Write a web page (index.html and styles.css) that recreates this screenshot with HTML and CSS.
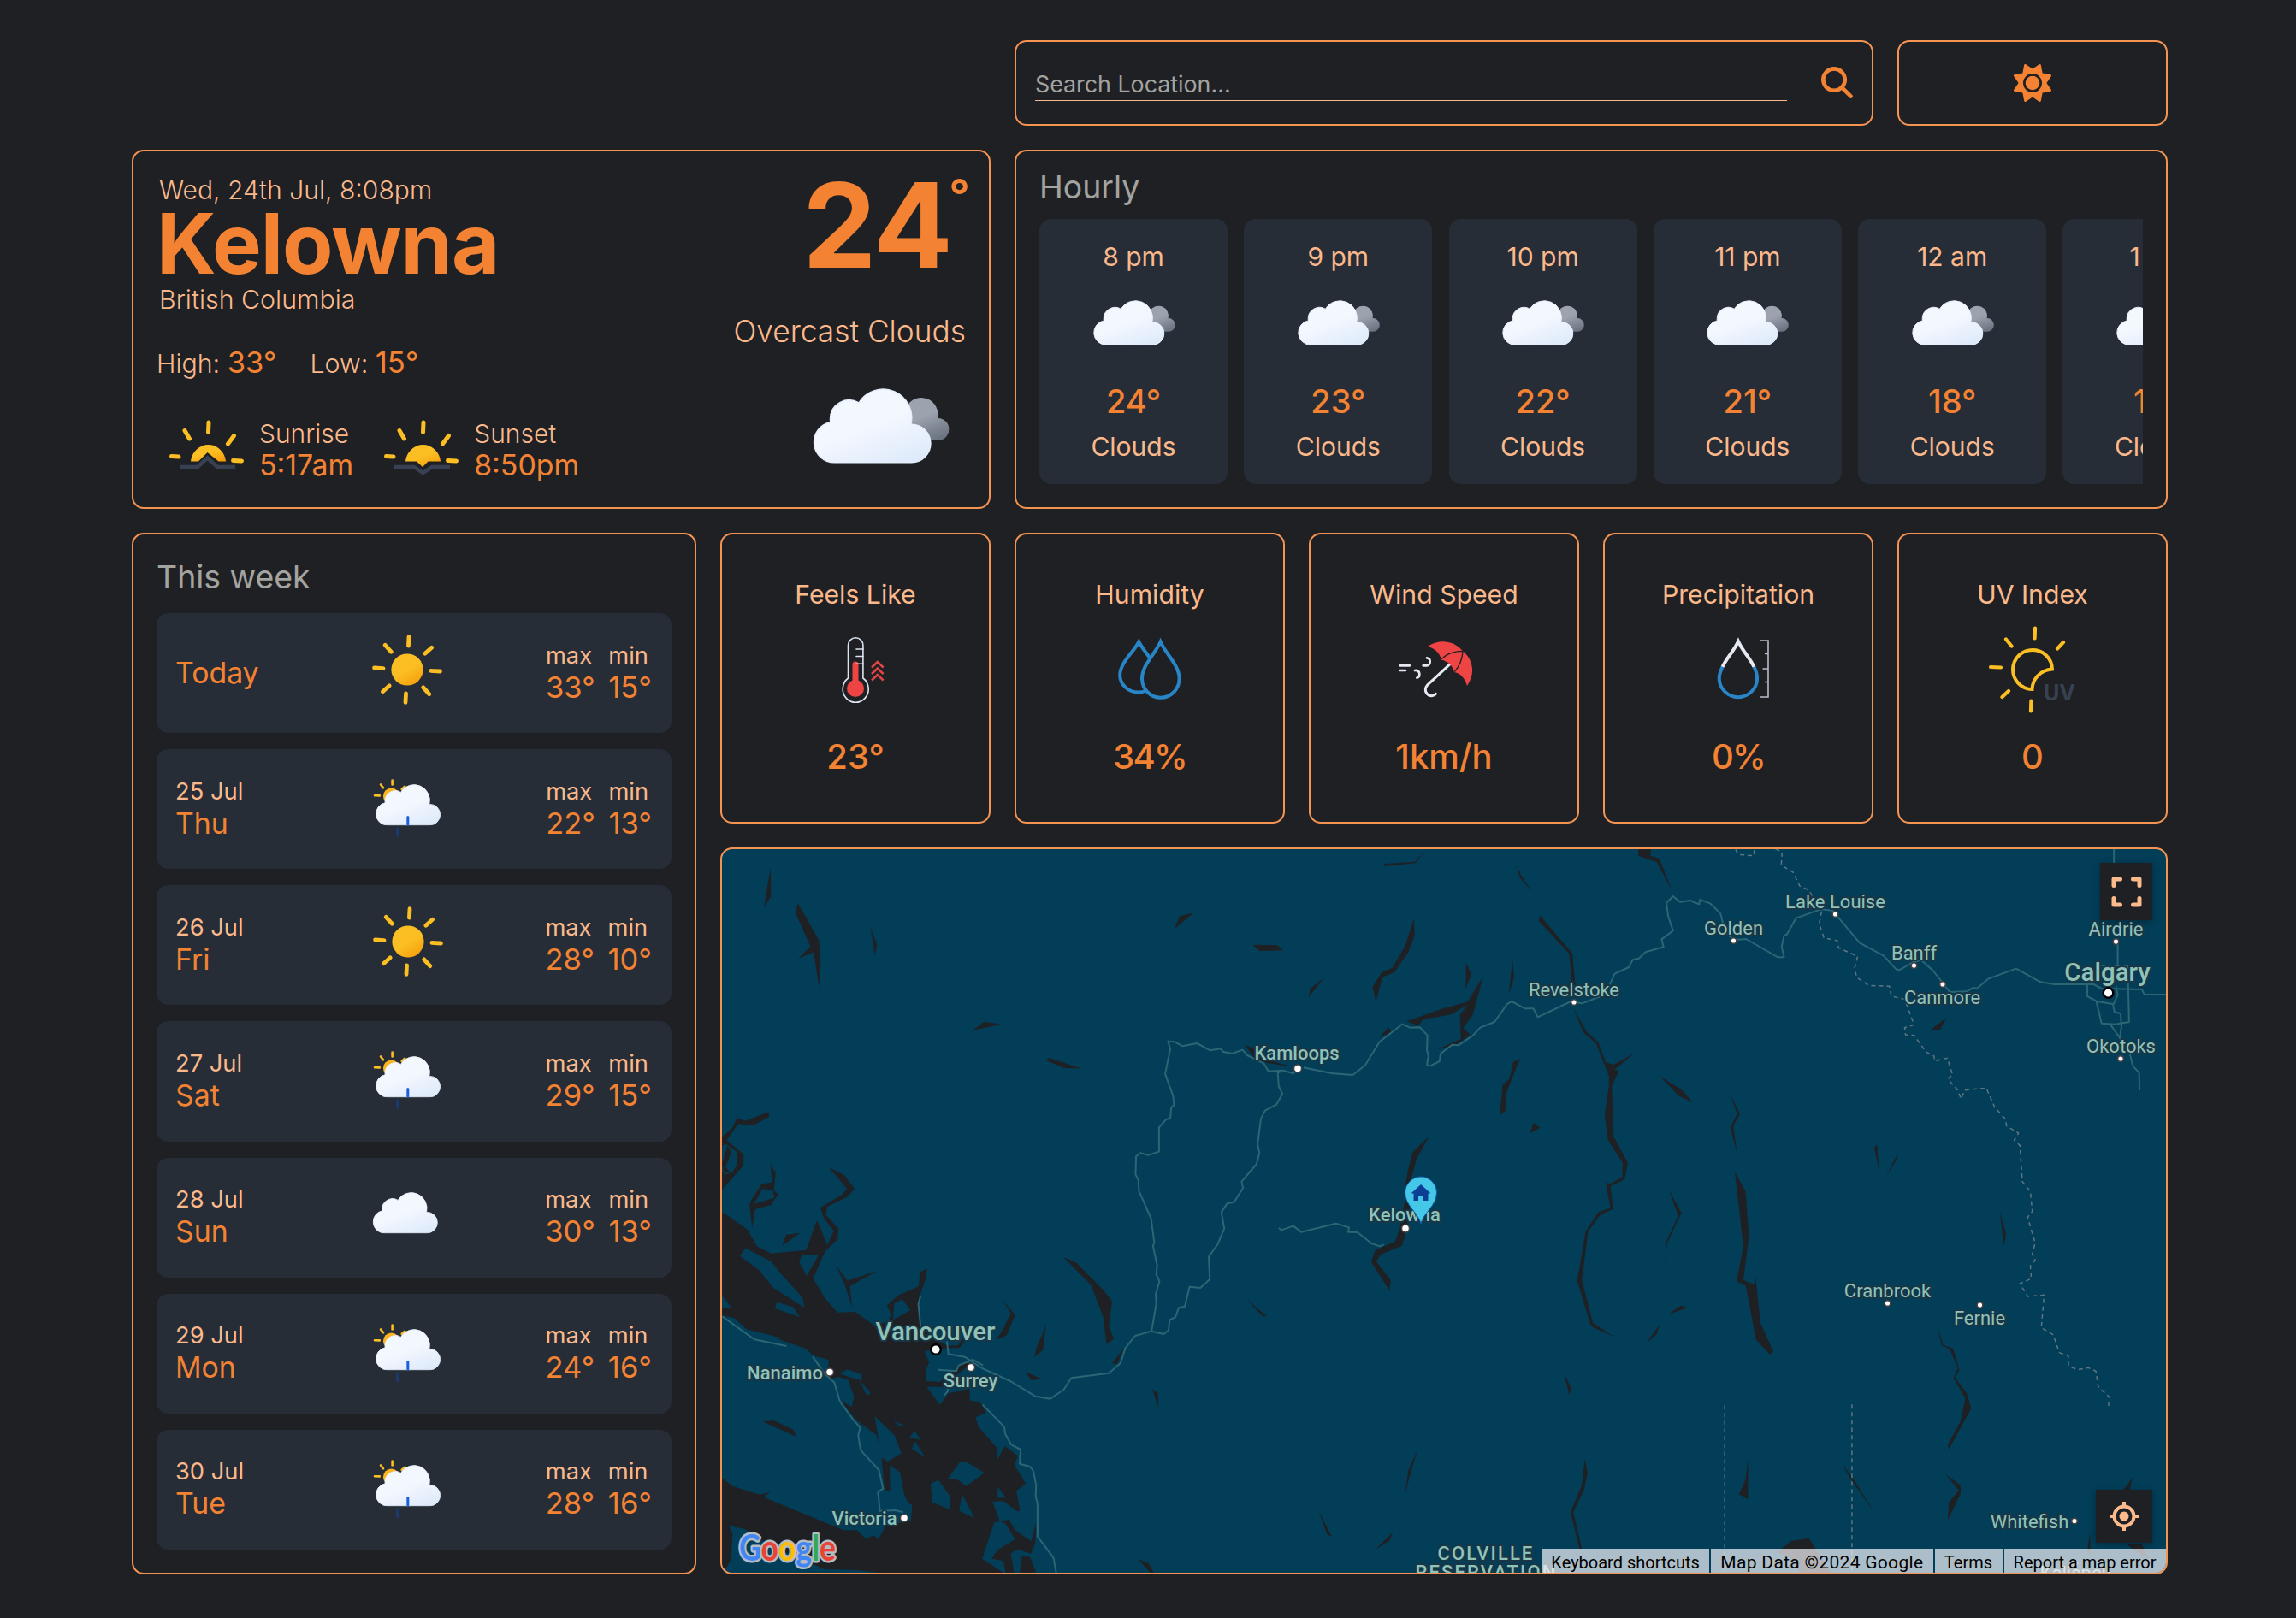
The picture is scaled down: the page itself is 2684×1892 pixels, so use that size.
FILE: index.html
```html
<!DOCTYPE html>
<html lang="en">
<head>
<meta charset="utf-8">
<title>Weather – Kelowna</title>
<link rel="stylesheet" href="styles.css">
</head>
<body>
<svg class="sprite" width="0" height="0" aria-hidden="true">
  <defs>
    <linearGradient id="g-cloud" x1="0.25" y1="0.1" x2="0.8" y2="1"><stop offset="0" stop-color="#f3f7fe"/><stop offset=".45" stop-color="#f3f7fe"/><stop offset="1" stop-color="#deeafb"/></linearGradient>
    <linearGradient id="g-dark" x1="0.25" y1="0.1" x2="0.8" y2="1"><stop offset="0" stop-color="#9ca3af"/><stop offset=".45" stop-color="#9ca3af"/><stop offset="1" stop-color="#6b7280"/></linearGradient>
    <linearGradient id="g-sun" x1="0.2" y1="0" x2="0.8" y2="1"><stop offset="0" stop-color="#fbbf24"/><stop offset=".5" stop-color="#fbbf24"/><stop offset="1" stop-color="#f59e0b"/></linearGradient>
  </defs>
  <symbol id="cloud" viewBox="0 0 350 222">
    <path d="M291 107c-.85 0-1.68.09-2.53.13A83.9 83.9 0 00135.6 42.92 55.91 55.91 0 0051 91a56.56 56.56 0 00.8 9.08A60 60 0 0063 219c1.35 0 2.67-.11 4-.19v.19h224a56 56 0 000-112z" fill="url(#g-cloud)" stroke="#e6effc" stroke-width="4"/>
  </symbol>
  <symbol id="overcast" viewBox="0 0 402 222">
    <path transform="translate(198 26)" d="M170.6 62.8c-.5 0-1 .05-1.5.08A49.2 49.2 0 0079.5 25.2 32.8 32.8 0 0029.9 53.3a33 33 0 00.5 5.4A35.2 35.2 0 0036.9 128h133.7a32.8 32.8 0 000-65.6z" fill="url(#g-dark)"/>
    <path d="M291 107c-.85 0-1.68.09-2.53.13A83.9 83.9 0 00135.6 42.92 55.91 55.91 0 0051 91a56.56 56.56 0 00.8 9.08A60 60 0 0063 219c1.35 0 2.67-.11 4-.19v.19h224a56 56 0 000-112z" fill="url(#g-cloud)" stroke="#e6effc" stroke-width="4"/>
  </symbol>
  <symbol id="sun" viewBox="0 0 120 120">
    <circle cx="60" cy="56" r="18.6" fill="url(#g-sun)"/>
    <g transform="rotate(3 60 56)" stroke="#fbbf24" stroke-width="4.8" stroke-linecap="round">
      <path id="ray" d="M60 28V17.5"/>
      <use href="#ray" transform="rotate(45 60 56)"/><use href="#ray" transform="rotate(90 60 56)"/><use href="#ray" transform="rotate(135 60 56)"/><use href="#ray" transform="rotate(180 60 56)"/><use href="#ray" transform="rotate(225 60 56)"/><use href="#ray" transform="rotate(270 60 56)"/><use href="#ray" transform="rotate(315 60 56)"/>
    </g>
  </symbol>
  <symbol id="day-rain" viewBox="0 0 120 120">
    <circle cx="41.5" cy="45" r="9.6" fill="#fbb520"/>
    <path d="M42.6 26.5v5M29 31.5l3 3.8M57.3 33.6l-3.6 3.2M22 44.2l5.8.2M30 59l2-2" stroke="#fbbf24" stroke-width="2.6" stroke-linecap="round"/>
    <use href="#cloud" x="22.8" y="31" width="76.5" height="48.5"/>
    <path d="M60.8 69.5v8.5" stroke="#1b5fdf" stroke-width="3" stroke-linecap="round"/>
    <path d="M48.6 83v8.5" stroke="#1b3a6e" stroke-width="3" stroke-linecap="round"/>
  </symbol>
  <symbol id="cloudy" viewBox="0 0 120 120">
    <use href="#cloud" x="19.5" y="30" width="76.5" height="48.5"/>
  </symbol>
  <symbol id="half-sun" viewBox="0 0 94 66">
    <path d="M21 14.5l5.5 9.5M49 5l-.5 11.5M78.5 20.5L71.5 30M5.5 44.5l8.5.5M77.5 49.5l10 .5" fill="none" stroke="#fbbf24" stroke-width="5" stroke-linecap="round"/>
  </symbol>
</svg>

<main class="dashboard">
  <form class="card search">
    <input class="search-input" type="text" placeholder="Search Location...">
    <svg class="search-icon" viewBox="0 0 512 512"><path d="M416 208c0 45.9-14.9 88.3-40 122.7L502.6 457.4c12.5 12.5 12.5 32.8 0 45.3s-32.8 12.5-45.3 0L330.7 376c-34.4 25.2-76.8 40-122.7 40C93.1 416 0 322.9 0 208S93.1 0 208 0S416 93.1 416 208zM208 352a144 144 0 1 0 0-288 144 144 0 1 0 0 288z"/></svg>
  </form>
  <button class="card theme" type="button" aria-label="Toggle theme">
    <svg class="theme-icon" viewBox="0 0 512 512"><path d="M361.5 1.2c5 2.1 8.6 6.6 9.6 11.9L391 121l107.9 19.8c5.3 1 9.8 4.6 11.9 9.6s1.5 10.7-1.6 15.2L446.9 256l62.3 90.3c3.1 4.5 3.7 10.2 1.6 15.2s-6.6 8.6-11.9 9.6L391 391 371.1 498.9c-1 5.3-4.6 9.8-9.6 11.9s-10.7 1.5-15.2-1.6L256 446.9l-90.3 62.3c-4.5 3.1-10.2 3.7-15.2 1.6s-8.6-6.6-9.6-11.9L121 391 13.1 371.1c-5.3-1-9.8-4.6-11.9-9.6s-1.5-10.7 1.6-15.2L65.1 256 2.8 165.7c-3.1-4.5-3.7-10.2-1.6-15.2s6.6-8.6 11.9-9.6L121 121 140.9 13.1c1-5.3 4.6-9.8 9.6-11.9s10.7-1.5 15.2 1.6L256 65.1 346.3 2.8c4.5-3.1 10.2-3.7 15.2-1.6zM160 256a96 96 0 1 1 192 0 96 96 0 1 1 -192 0zm224 0a128 128 0 1 0 -256 0 128 128 0 1 0 256 0z"/></svg>
  </button>

  <section class="card current">
    <div class="current-left">
      <p class="date">Wed, 24th Jul, 8:08pm</p>
      <h1 class="city">Kelowna</h1>
      <p class="region">British Columbia</p>
      <p class="range"><span>High: <b>33°</b></span><span>Low: <b>15°</b></span></p>
      <div class="sun-times">
        <div class="sun-time">
          <svg class="sun-time-icon" viewBox="0 0 94 66"><use href="#half-sun"/><path d="M28 50.5a20.6 21.5 0 0 1 41 0H60.5L47.5 40 37 50.5z" fill="url(#g-sun)"/><path d="M15 57H36L47.5 46.5 59 57H80" fill="none" stroke="#374151" stroke-width="4.5"/></svg>
          <div><p class="sun-label">Sunrise</p><p class="sun-value">5:17am</p></div>
        </div>
        <div class="sun-time">
          <svg class="sun-time-icon" viewBox="0 0 94 66"><use href="#half-sun"/><path d="M28 50.5a20.6 21.5 0 0 1 41 0H54.5L48 57 41 50.5z" fill="url(#g-sun)"/><path d="M15 57H38L48.5 64 59 57H80" fill="none" stroke="#374151" stroke-width="4.5"/></svg>
          <div><p class="sun-label">Sunset</p><p class="sun-value">8:50pm</p></div>
        </div>
      </div>
    </div>
    <div class="current-right">
      <p class="temp">24<span class="degree">°</span></p>
      <p class="summary">Overcast Clouds</p>
      <svg class="summary-icon" viewBox="0 0 402 222"><use href="#overcast"/></svg>
    </div>
  </section>

  <section class="card hourly">
    <h2 class="title">Hourly</h2>
    <div class="hours">
      <article class="hour"><p class="hour-time">8 pm</p><svg class="hour-icon"><use href="#overcast"/></svg><p class="hour-temp">24°</p><p class="hour-text">Clouds</p></article>
      <article class="hour"><p class="hour-time">9 pm</p><svg class="hour-icon"><use href="#overcast"/></svg><p class="hour-temp">23°</p><p class="hour-text">Clouds</p></article>
      <article class="hour"><p class="hour-time">10 pm</p><svg class="hour-icon"><use href="#overcast"/></svg><p class="hour-temp">22°</p><p class="hour-text">Clouds</p></article>
      <article class="hour"><p class="hour-time">11 pm</p><svg class="hour-icon"><use href="#overcast"/></svg><p class="hour-temp">21°</p><p class="hour-text">Clouds</p></article>
      <article class="hour"><p class="hour-time">12 am</p><svg class="hour-icon"><use href="#overcast"/></svg><p class="hour-temp">18°</p><p class="hour-text">Clouds</p></article>
      <article class="hour"><p class="hour-time">1 am</p><svg class="hour-icon"><use href="#overcast"/></svg><p class="hour-temp">17°</p><p class="hour-text">Clouds</p></article>
    </div>
  </section>

  <section class="card week">
    <h2 class="title">This week</h2>
    <div class="days">
      <article class="day"><div class="day-name"><p class="lg">Today</p></div><svg class="day-icon"><use href="#sun"/></svg><div class="temps"><div><p class="sm">max</p><p class="lg">33°</p></div><div><p class="sm">min</p><p class="lg">15°</p></div></div></article>
      <article class="day"><div class="day-name"><p class="sm">25 Jul</p><p class="lg">Thu</p></div><svg class="day-icon"><use href="#day-rain"/></svg><div class="temps"><div><p class="sm">max</p><p class="lg">22°</p></div><div><p class="sm">min</p><p class="lg">13°</p></div></div></article>
      <article class="day"><div class="day-name"><p class="sm">26 Jul</p><p class="lg">Fri</p></div><svg class="day-icon"><use href="#sun" x="1"/></svg><div class="temps"><div><p class="sm">max</p><p class="lg">28°</p></div><div><p class="sm">min</p><p class="lg">10°</p></div></div></article>
      <article class="day"><div class="day-name"><p class="sm">27 Jul</p><p class="lg">Sat</p></div><svg class="day-icon"><use href="#day-rain"/></svg><div class="temps"><div><p class="sm">max</p><p class="lg">29°</p></div><div><p class="sm">min</p><p class="lg">15°</p></div></div></article>
      <article class="day"><div class="day-name"><p class="sm">28 Jul</p><p class="lg">Sun</p></div><svg class="day-icon"><use href="#cloudy"/></svg><div class="temps"><div><p class="sm">max</p><p class="lg">30°</p></div><div><p class="sm">min</p><p class="lg">13°</p></div></div></article>
      <article class="day"><div class="day-name"><p class="sm">29 Jul</p><p class="lg">Mon</p></div><svg class="day-icon"><use href="#day-rain"/></svg><div class="temps"><div><p class="sm">max</p><p class="lg">24°</p></div><div><p class="sm">min</p><p class="lg">16°</p></div></div></article>
      <article class="day"><div class="day-name"><p class="sm">30 Jul</p><p class="lg">Tue</p></div><svg class="day-icon"><use href="#day-rain"/></svg><div class="temps"><div><p class="sm">max</p><p class="lg">28°</p></div><div><p class="sm">min</p><p class="lg">16°</p></div></div></article>
    </div>
  </section>

  <section class="card metric">
    <h3 class="metric-name">Feels Like</h3>
    <svg class="metric-icon" viewBox="0 0 120 120" fill="none">
      <path d="M51.5 70V31.5a8.7 8.7 0 0 1 17.4 0V70a15 15.6 0 1 1-17.4 0z" stroke="#dbe4ef" stroke-width="1.6"/>
      <path d="M60 54V80" stroke="#ef4444" stroke-width="7" stroke-linecap="round"/><circle cx="60" cy="82" r="10" fill="#ef4444"/>
      <path d="M61 36h8M61 44.5h8M61 53.3h8" stroke="#dbe4ef" stroke-width="1.6" stroke-linecap="round"/>
      <path d="M79 57.5l6.8-6.5 6.8 6.5M79 65l6.8-6.5 6.8 6.5M79 72.5l6.8-6.5 6.8 6.5" stroke="#e04444" stroke-width="2.6"/>
    </svg>
    <p class="metric-value">23°</p>
  </section>
  <section class="card metric">
    <h3 class="metric-name">Humidity</h3>
    <svg class="metric-icon" viewBox="0 0 120 120" fill="#1f2024" stroke="#2885c7" stroke-width="4">
      <path d="M47.3 27.5C41 40 25.2 52 25.2 66.5a21.5 20 0 0 0 43 0C68.2 52 53.5 40 47.3 27.5z"/>
      <path d="M72.6 27.5C66 42 51 55 51 70.5a21.8 22.3 0 0 0 43.6 0C94.6 55 79 42 72.6 27.5z"/>
    </svg>
    <p class="metric-value percent">34%</p>
  </section>
  <section class="card metric">
    <h3 class="metric-name">Wind Speed</h3>
    <svg class="metric-icon" viewBox="0 0 120 120" fill="none">
      <g transform="translate(-8 7) scale(.33333)">
        <path d="M225 140L145 214C132 230 142 251 162 251Q170 251 175 244" stroke="#e5e9f2" stroke-width="9" stroke-linecap="round"/>
        <path d="M147 79C175 54 235 50 270 94C304 122 317 170 285 216C278 190 262 172 240 168C236 146 216 128 195 125C190 102 172 84 147 79z" fill="#ef4444"/>
        <path d="M196 122Q220 95 270 94Q268 135 241 167" stroke="#1f2024" stroke-width="4"/>
        <path d="M50 145H84M50 162H69M131 145H143C158 145 160 120 144 118M102 162C122 160 122 184 109 188" stroke="#e5e9f2" stroke-width="8" stroke-linecap="round"/>
      </g>
    </svg>
    <p class="metric-value">1km/h</p>
  </section>
  <section class="card metric">
    <h3 class="metric-name">Precipitation</h3>
    <svg class="metric-icon" viewBox="0 0 120 120" fill="none">
      <path d="M41.5 57C46 47 55 38 60 27c5 11 14 20 18.5 30" stroke="#e5e9f2" stroke-width="4"/>
      <path d="M41.5 57C39 62 37.7 66 37.7 70a22.2 22.2 0 0 0 44.4 0C82.1 66 81 62 78.5 57" stroke="#2885c7" stroke-width="4"/>
      <path d="M86 26h9v66h-9M91 41.5h4M88.5 59h6.5M91 74.5h4" stroke="#b6bdc9" stroke-width="1.6"/>
    </svg>
    <p class="metric-value percent">0%</p>
  </section>
  <section class="card metric">
    <h3 class="metric-name">UV Index</h3>
    <svg class="metric-icon" viewBox="0 0 120 120" fill="none">
      <path d="M83 59.5A23 23 0 1 0 59.5 83C60 71 69 60.5 83 59.5z" stroke="#fbbf24" stroke-width="4"/>
      <path d="M63 11.5l-.4 12M29 24.5l6.5 8M96 28l-7 7.5M11 57l12 .5M24.5 92l7.5-7M58 108.5l.4-12" stroke="#fbbf24" stroke-width="4.2" stroke-linecap="round"/>
      <text x="73" y="95.5" class="uv-mark">UV</text>
    </svg>
    <p class="metric-value">0</p>
  </section>

  <section class="card map">
    <svg class="map-canvas" viewBox="0 0 1688 846">
      <g class="water" fill-rule="evenodd">
        <g transform="translate(-14 -13) scale(.5485 .33333)">
          <path d="M129 105L130 205 115 242ZM187 228L232 358 236 440 232 522 221 400 188 423 214 380 182 262ZM342 312L356 375 351 412ZM1031 262L1001 274 990 318ZM1157 374L1209 376 1222 394 1171 396ZM1500 283L1502 340 1489 398 1459 470 1433 488 1419 577 1412 521 1432 470 1454 455 1481 380ZM1308 490L1276 558 1279 529ZM559 675L585 644 620 653ZM722 770L792 809 754 806 717 781ZM1437 90L1501 84 1524 45 1503 88 1437 99ZM1484 643L1568 595V622L1520 636 1510 658ZM1427 700L1446 663 1452 680ZM1140 724L1165 745 1180 775 1240 802 1190 790 1160 775Z"/>
          <path d="M125 960L126 978 93 1007 60 1003 36 1060 72 1110 71 1150 26 1232V1170L46 1175 58 1145 57 1100 33 1072 26 1080V1048L47 1018 58 981 76 992ZM38 1078L45 1105 33 1155 46 1175 30 1180 26 1140Z"/>
          <path d="M129 1143L140 1175 136 1235 145 1250 130 1287 96 1302 90 1368 84 1285 88 1270 110 1213 132 1208ZM112 1230L134 1236 137 1262 94 1283Z"/>
          <path d="M253 1155L286 1182 308 1230 294 1257 250 1292 235 1297 280 1253 292 1230Z"/>
          <path d="M1533 1045L1506 1125 1495 1190 1490 1340H1480L1481 1230 1488 1160 1498 1100Z"/>
        </g>
        <g transform="translate(-14 407) scale(.5485 .33333)">
          <path d="M26 52L80 113 100 172 130 197 205 185 228 80 250 168 264 118 243 75 235 37 280 -7 294 -3 250 32 247 62 274 110 272 148 245 190 220 285 245 355 272 404 310 402 350 450 380 435 386 410 377 380 400 345 445 312 447 263 463 250 460 285 447 345 445 375 449 440 480 500 505 520 528 520 540 495 545 500 532 528 500 530 457 540 467 580 460 605 460 645 490 648 545 575 552 590 525 625 497 665 462 665 490 728 508 688 553 672 554 713 575 718 589 755 566 772 572 805 613 882 611 925 628 873 656 907 649 940 673 1005 653 1030 661 1100 655 1102 625 1065 602 1068 618 1137 606 1140 580 1268 625 1317H362L310 1308 243 1305 205 1275 130 1225 75 1165 40 1152 48 1180 45 1270 35 1300H26V985L48 1013 105 1043 128 1034 115 1052 285 1168 313 1168 333 1200 348 1185 359 1200 375 1150 428 1135 431 1078 424 1075 414 1045 405 965 383 940 384 1028 372 1030 365 905 355 835 310 780 280 715 302 735 307 700 295 642 275 630 250 640 253 570 220 556 205 532 150 500 143 490 78 463 52 424 26 415V388L46 388 26 345Z"/>
          <path d="M618 1137L637 1130 650 1168 685 1207 695 1140 693 1215 684 1250 655 1235 641 1250 648 1316H630L625 1275 600 1268 612 1238 650 1200 630 1145ZM665 1258L682 1262 695 1316H660Z"/>
          <path d="M154 170L162 132 192 125ZM269 240L293 293 358 257 298 312 303 388 288 310ZM625 362L650 413 632 485 610 500 622 470 641 408ZM753 210L781 230 838 325 857 365 850 455 861 497 845 515 838 420 812 308ZM716 444L710 535 691 562 698 515 706 490ZM882 530L868 585 857 583ZM672 613L707 637 685 642ZM943 672L955 688 955 737ZM1143 358L1187 418 1178 418ZM112 787L135 783 178 815 183 839ZM1508 884L1490 985 1481 1045 1488 960ZM1297 1100L1325 1190 1315 1183ZM1455 1176L1448 1205 1418 1236ZM912 1268L935 1285 946 1316 938 1316ZM1480 20L1490 20 1484 120 1475 170 1430 200 1420 225 1451 292 1448 327 1409 227 1418 185 1460 155 1470 110Z"/>
        </g>
        <g transform="translate(836 -13) scale(.5548 .33333)">
          <path d="M424 36H451L449 62 468 72 496 187 463 85 424 62ZM167 92L177 130 199 187 174 138ZM217 272L285 405 291 515 285 515 278 405 214 290ZM61 438L72 478 60 528ZM159 425L162 490 151 550ZM97 485L75 620 55 665 70 690 40 725 0 742 50 705 48 620 64 585 30 618 0 628V605L65 573ZM287 595L315 680 340 717 355 787 372 795 415 755 374 812 383 816 368 870 372 1048 402 1140 395 1197 365 1222 371 1302 345 1320 318 1380 305 1550 328 1700 373 1750 324 1712 295 1553 313 1380 340 1312 365 1298 355 1205 362 1215 390 1190 391 1140 360 1060 353 970 362 870 362 835 350 785 335 720 308 682ZM175 773L156 850 145 900 145 955 132 972 138 865 152 845 160 787ZM203 998L217 1016 195 1036ZM469 835L515 883 539 928 510 905ZM619 903L638 968 624 1010 632 1107 618 1015 632 968ZM927 1076L931 1168 921 1085ZM971 1105L966 1135 946 1186ZM1073 630L1060 672 1040 673ZM627 1170L650 1240 657 1400 645 1550 668 1567 671 1540 681 1700 708 1800 701 1812 672 1760 650 1570 631 1555 645 1435 635 1280ZM488 1232L515 1315 485 1420 480 1495 483 1415 508 1325Z"/>
        </g>
        <g transform="translate(836 407) scale(.5548 .33333)">
          <path d="M487 411L513 380 528 387ZM469 446L462 482 441 510ZM267 615L283 672 278 692ZM311 918L317 965 310 1025 287 1105 305 1233H300L281 1105 305 1010ZM655 915L655 1060 636 1042 650 990ZM853 937L876 985 923 1110 870 985ZM1053 445L1066 518 1087 530 1100 605 1092 635 1117 690 1125 742 1078 885 1076 868 1103 785 1113 705 1088 635 1097 600 1080 532 1063 520ZM1186 55L1199 130 1194 172ZM1071 972L1103 1010 1103 1040 1076 1133 1078 1070 1099 1028ZM1466 982L1459 1026 1447 1026ZM717 1245L746 1206 783 1196 800 1240 830 1318H765L745 1265ZM1376 1175V1260L1370 1240ZM1452 1215L1485 1217 1500 1270 1470 1240Z"/>
        </g>
      </g>
      <g class="island" transform="translate(-14 407) scale(.5485 .33333)">
        <path d="M75 178L130 225 155 275 197 352 201 387 135 318 105 256 64 207ZM196 200L232 202 206 275 190 228ZM143 368L177 385 191 420 138 390ZM410 358L427 397 390 430 393 372ZM275 618L293 604 324 622 322 648 342 685 335 698 318 640 300 632ZM351 768L393 835 408 898 379 927 362 910 358 840ZM391 783L418 804 402 800ZM436 820L450 852 425 843ZM437 856L458 912 430 882ZM533 928L548 930 585 967 546 1013 525 988 507 987ZM487 992L512 1050 511 1095 474 1070 470 1005ZM537 1042L564 1125 531 1100ZM613 1015L630 1053 613 1055Z"/>
      </g>
      <g class="road">
        <path transform="translate(-14 -13) scale(.5485 .33333)" d="M1252 812L1243 826 1221 815 1190 818 1180 790 1145 762 1135 743 1113 756 1094 750 1088 739 1066 745 1038 720 1007 730 991 715 976 713 981 740 970 827 987 905 989 937 983 945 981 983 972 987 957 1015 957 1100 935 1112 917 1105 908 1117 907 1180 913 1200 914 1237 940 1335 947 1420 944 1430 953 1500 951 1530 958 1555 950 1600 951 1635 941 1730M1221 815L1210 824 1212 870 1220 898 1207 935 1183 956 1174 985 1167 1075 1171 1103 1165 1143 1133 1205 1136 1228 1117 1277 1102 1282 1090 1312 1096 1370 1082 1425 1063 1468 1065 1548 1045 1578 1022 1574 1012 1643 999 1648 992 1680 980 1690 977 1727 967 1740 941 1730 906 1746 885 1790 875 1842 850 1877 770 1894 754 1935 725 1967 693 1958 640 1905 580 1860 543 1820 508 1810 505 1765M1265 805L1325 825 1370 831 1396 797 1427 715 1475 653 1492 665 1513 664 1529 692 1528 745 1531 765 1528 795 1535 799 1555 783"/>
        <path transform="translate(836 -13) scale(.5548 .33333)" d="M5 785L7 757 32 725 45 727 75 693 91 665 121 645 147 583 157 573 185 598 203 598 212 628 282 573 305 580 345 555 362 520 374 476 404 453 412 427 425 422 439 400 477 382 473 355 497 325 487 275 483 228 497 204 512 224 533 219 552 232 554 216 575 229 597 265 607 330 625 357 651 354 718 418 731 418 726 380 731 342 737 338 756 281 808 250 833 254 890 367 941 413 967 460 974 463 1003 435 1020 428 1045 465 1080 540 1115 538 1130 525 1137 528 1162 493 1220 458 1271 505 1300 513 1382 512 1400 528 1485 531 1490 548 1537 549M1426 36V90M1434 362V445M1400 447H1455L1458 645 1428 653 1400 650 1389 572 1370 555V512M1389 572L1425 583 1434 550 1430 520M1424 583L1427 610 1440 616 1442 660 1438 705M1418 653L1440 705 1460 760 1466 800 1479 823 1480 885"/>
        <path transform="translate(-14 407) scale(.5485 .33333)" d="M26 418L95 499 163 522M219 560L245 620 265 650 277 717 305 780 320 808 316 835 321 887 360 957 369 1023 358 1033 362 1100 395 1098 412 1105M449 345L444 375 449 455M487 605L525 610 530 590 560 570 582 590M505 640L507 680 499 695M581 728L627 805 629 830 642 868 662 885 660 935 682 945 689 960 695 1010 694 1050 698 1075V1190L732 1265 738 1318M1212 108L1218 115 1243 101 1260 122 1334 92 1362 106 1360 122 1380 123 1410 162 1428 172 1436 166"/>
      </g>
      <g class="boundary">
        <path transform="translate(836 -13) scale(.5548 .33333)" d="M629 40L634 58 668 62 668 40M713 38L727 50 725 95 750 120 764 168 782 182 811 250 805 300 815 350 843 360 846 385 886 415 879 460 885 490 910 517 953 520 957 555 985 565 1005 655 985 665 987 690 1005 692 1030 750 1047 765 1048 782 1075 772 1086 830 1076 845 1097 885 1104 915 1112 884 1157 877 1175 945 1197 985 1200 1010 1225 1035 1216 1060 1228 1078 1233 1205 1250 1240 1254 1310 1244 1330 1260 1420 1254 1460 1260 1480 1250 1500 1252 1545 1228 1563 1244 1608 1279 1603 1273 1718 1298 1742 1311 1805 1330 1817 1330 1852 1350 1865 1372 1858 1388 1870 1393 1925 1417 1962 1414 1995"/>
        <path transform="translate(836 407) scale(.5548 .33333)" d="M606 730V1318M874 727V1318"/>
      </g>
      <g class="place">
        <text class="mid" x="672" y="246">Kamloops</text><text class="mid" x="798" y="434.5">Kelowna</text>
        <text class="mid" x="73.5" y="619.5">Nanaimo</text><text class="mid" x="290.5" y="628.5">Surrey</text><text class="mid" x="166.5" y="789.5">Victoria</text>
        <text x="1182.5" y="100">Golden</text><text x="1301.5" y="69">Lake Louise</text><text x="1393.5" y="129">Banff</text><text x="1426.5" y="181">Canmore</text>
        <text x="996" y="172">Revelstoke</text><text x="1629.5" y="101">Airdrie</text><text x="1635.5" y="237.5">Okotoks</text>
        <text x="1362.5" y="523.5">Cranbrook</text><text x="1470" y="555.5">Fernie</text><text x="1528.5" y="793.5">Whitefish</text><text x="1582" y="854">Kalispell</text>
        <text class="big" x="1619.5" y="153.5">Calgary</text><text class="big" x="249.5" y="573.5">Vancouver</text>
        <text class="area" x="893" y="831">COLVILLE</text><text class="area" x="893.5" y="853">RESERVATION</text>
      </g>
      <g class="dot">
        <circle cx="673" cy="256.5" r="4.5"/><circle cx="799" cy="443.5" r="4.5"/><circle cx="126" cy="611.5" r="4.5"/><circle cx="291" cy="606" r="4.5"/><circle cx="213" cy="782" r="4.5"/>
        <circle cx="1182.5" cy="107" r="3.3"/><circle cx="1301.5" cy="76" r="3.3"/><circle cx="1393.5" cy="136" r="3.3"/><circle cx="1427" cy="158" r="3.3"/><circle cx="996" cy="179" r="3.3"/><circle cx="1629.5" cy="108" r="3.3"/><circle cx="1635" cy="245" r="3.3"/><circle cx="1362.5" cy="531" r="3.3"/><circle cx="1470.5" cy="533" r="3.3"/><circle cx="1581" cy="785.5" r="3.3"/><circle cx="1582" cy="835" r="3.3"/>
        <circle class="dot-big" cx="1620.5" cy="168" r="5.8"/><circle class="dot-big" cx="250" cy="585" r="5.8"/>
      </g>
      <path d="M817 438C814 425 798.5 417 798.5 401.5a18.5 18.5 0 0 1 37 0C835.5 417 820 425 817 438z" fill="#45c8e8" stroke="#0a5aa8" stroke-width="1"/>
      <path d="M817 392l-11.5 10.5h3V411h5.5v-6h6v6h5.5v-8.5h3z" fill="#0b3f94"/>
      <text class="brand" x="20" y="832" textLength="113" lengthAdjust="spacingAndGlyphs"><tspan fill="#4285f4">G</tspan><tspan fill="#ea4335">o</tspan><tspan fill="#fbbc05">o</tspan><tspan fill="#4285f4">g</tspan><tspan fill="#34a853">l</tspan><tspan fill="#ea4335">e</tspan></text>
    </svg>
    <button class="control fullscreen" type="button" aria-label="Fullscreen"><svg viewBox="0 0 36 36" width="36" height="36" fill="none" stroke="#fdba8c" stroke-width="5" stroke-linecap="round" stroke-linejoin="round"><path d="M3 10.500V3h7.500M25.500 3H33v7.500M33 25.500V33h-7.500M10.500 33H3v-7.500"/></svg></button>
    <button class="control locate" type="button" aria-label="Locate"><svg viewBox="0 0 36 36" width="36" height="36" fill="none" stroke="#fdba8c" stroke-width="4"><circle cx="18" cy="18" r="11.5"/><path d="M18 1v7M18 28v7M1 18h7M28 18h7"/><circle cx="18" cy="18" r="5.5" fill="#fdba8c" stroke="none"/></svg></button>
    <div class="legal"><span>Keyboard shortcuts</span><span class="credit">Map Data ©2024 Google</span><span>Terms</span><span>Report a map error</span></div>
  </section>
</main>
</body>
</html>
```
FILE: styles.css
```css
:root {
  --bg: #1f2024;
  --panel: #272d37;
  --orange: #f38333;
  --line: #f49352;
  --peach: #fbb98b;
  --muted: #a3a3a0;
}

* { box-sizing: border-box; margin: 0; }

body {
  padding: 47px 150px 51px 154px;
  background: var(--bg);
  color: var(--peach);
  font-family: Inter, "Liberation Sans", sans-serif;
}

.sprite { position: absolute; }

.dashboard {
  display: grid;
  grid-template-columns: repeat(7, 1fr);
  grid-template-rows: 100px 420px 340px 850px;
  gap: 28px;
}

.card {
  min-width: 0;
  border: 2px solid var(--line);
  border-radius: 14px;
  background: var(--bg);
}

/* Top bar */
.search {
  grid-column: 4 / 7;
  display: flex;
  align-items: center;
  gap: 40px;
  padding: 0 22px;
}
.search-input {
  flex: 1;
  height: 42px;
  padding: 3px 0 0;
  border: 0;
  border-bottom: 1px solid var(--peach);
  background: none;
  font: 400 26.8px Inter, sans-serif;
}
.search-input::placeholder { color: #a3a3a0; opacity: 1; }
.search-icon { width: 37px; height: 37px; margin-bottom: 1px; fill: var(--orange); }
.theme {
  display: flex;
  align-items: center;
  justify-content: center;
}
.theme-icon { width: 44px; height: 44px; fill: var(--orange); }

/* Current conditions */
.current {
  grid-column: 1 / 4;
  display: flex;
  justify-content: space-between;
  padding: 28px 27px 0;
}
.date, .region {
  padding-left: 3px;
  font-size: 30.3px;
  font-weight: 300;
  line-height: 34px;
}
.date { font-size: 30.1px; }
.city {
  margin: 0 0 2px;
  color: var(--orange);
  font-size: 97px;
  font-weight: 700;
  line-height: 92px;
  letter-spacing: -1px;
}
.range {
  display: flex;
  gap: 39px;
  margin-top: 40px;
  font-size: 30.3px;
  font-weight: 300;
  line-height: 34px;
}
.range b { color: var(--orange); font-size: 34.5px; font-weight: 400; }
.sun-times { display: flex; gap: 33px; margin-top: 47px; }
.sun-time { display: flex; gap: 14px; padding-left: 12px; margin-right: -12px; }
.sun-time-icon { width: 94px; height: 66px; }
.sun-label { font-size: 30px; font-weight: 300; line-height: 36px; }
.sun-value { color: var(--orange); font-size: 33.8px; font-weight: 400; line-height: 37px; }

.current-right {
  display: flex;
  flex-direction: column;
  align-items: flex-end;
}
.temp {
  position: relative;
  margin-right: 16px;
  color: var(--orange);
  font-size: 137px;
  font-weight: 700;
  line-height: 116px;
  letter-spacing: -1px;
}
.degree {
  position: absolute;
  top: -3px;
  right: -20px;
  font-size: 54px;
  font-weight: 600;
  line-height: 54px;
}
.summary { margin: 47px 0 46px; font-size: 35.3px; font-weight: 300; line-height: 40px; }
.summary-icon { width: 160px; height: 88px; margin-right: 19px; }

/* Hourly */
.title { color: var(--muted); font-size: 37.4px; font-weight: 400; line-height: 46px; }
.hourly {
  grid-column: 4 / 8;
  padding: 19px 27px 27px;
}
.hours { display: flex; gap: 19.3px; margin-top: 14px; overflow: hidden; }
.hour {
  display: flex;
  flex: 0 0 220px;
  flex-direction: column;
  align-items: center;
  height: 310px;
  padding-top: 24px;
  border-radius: 14px;
  background: var(--panel);
  white-space: nowrap;
}
.hour-time, .hour-text { font-size: 30px; font-weight: 400; line-height: 40px; }
.hour-icon { width: 96px; height: 53px; margin: 31px 0 39px 1px; }
.hour-temp { color: var(--orange); font-size: 38px; font-weight: 450; line-height: 52px; }
.hour-text { margin-top: 7px; }

/* Week */
.week {
  grid-column: 1 / 3;
  grid-row: 3 / 5;
  display: flex;
  flex-direction: column;
  gap: 19px;
  padding: 27px;
}
.days { display: flex; flex: 1; flex-direction: column; gap: 19px; }
.day {
  display: flex;
  flex: 1;
  align-items: center;
  justify-content: space-between;
  padding: 0 23px 0 22px;
  border-radius: 14px;
  background: var(--panel);
}
.day-name { width: 211px; }
.day-name, .temps { padding-bottom: 4px; }
.day-name p:only-child { padding-top: 3px; }
.day-icon { width: 120px; height: 120px; margin-right: auto; }
.temps { display: flex; gap: 15.5px; }
.sm { font-size: 27.3px; line-height: 36px; }
.lg { color: var(--orange); font-size: 33.8px; line-height: 37px; }
.temps .lg { font-size: 34.5px; }

/* Metrics */
.metric {
  display: flex;
  flex-direction: column;
  align-items: center;
  padding-top: 47px;
}
.metric-name { font-size: 30.2px; font-weight: 400; line-height: 46px; }
.metric-icon { width: 120px; height: 120px; margin: 5px 0 17px; }
.metric-value { color: var(--orange); font-size: 40px; font-weight: 550; line-height: 50px; }
.percent { letter-spacing: -1.8px; }
.uv-mark { fill: #374151; font: 700 25px Inter, sans-serif; }

/* Map */
.map {
  grid-column: 3 / 8;
  position: relative;
  overflow: hidden;
  background: #023e58;
}
.map-canvas { display: block; width: 1688px; height: 846px; }
.water { fill: #1f2024; }
.island { fill: #023e58; }
.road { fill: none; stroke: #2c6675; stroke-width: 2; stroke-linejoin: round; }
.boundary { fill: none; stroke: #5f7580; stroke-width: 1.5; stroke-dasharray: 5 4; }
.road path, .boundary path { vector-effect: non-scaling-stroke; }
.place text {
  fill: #8ec3b9;
  stroke: #1a3646;
  stroke-width: 4px;
  stroke-linejoin: round;
  paint-order: stroke;
  font: 400 22px Roboto, sans-serif;
  text-anchor: middle;
}
.place .mid { font-weight: 500; }
.place .big { font-size: 29.5px; font-weight: 550; }
.place .area { font-weight: 500; letter-spacing: 2.1px; }
.dot circle { fill: #fff; stroke: #4a3f42; stroke-width: 1.5; }
.dot .dot-big { stroke: #000; stroke-width: 2.5; }
.brand {
  font: 700 42px Lato, sans-serif;
  stroke: #b4bcc4;
  stroke-width: 5px;
  stroke-linejoin: round;
  paint-order: stroke;
}
.control {
  position: absolute;
  display: flex;
  align-items: center;
  justify-content: center;
  padding: 0;
  border: 0;
  background: #1f2024;
  box-shadow: 0 2px 8px rgba(0, 0, 0, .3);
}
.fullscreen { top: 16px; right: 16px; width: 61px; height: 67px; }
.locate { right: 16px; bottom: 35px; width: 66px; height: 62px; }
.legal {
  position: absolute;
  right: 0;
  bottom: 0;
  display: flex;
  gap: 2px;
  color: #000;
  font: 400 20px/24px Roboto, sans-serif;
  white-space: nowrap;
}
.legal span { padding: 4px 11.5px 0 11px; background: rgba(245, 245, 250, .7); }
.legal .credit { font-size: 21px; letter-spacing: .3px; }
```
